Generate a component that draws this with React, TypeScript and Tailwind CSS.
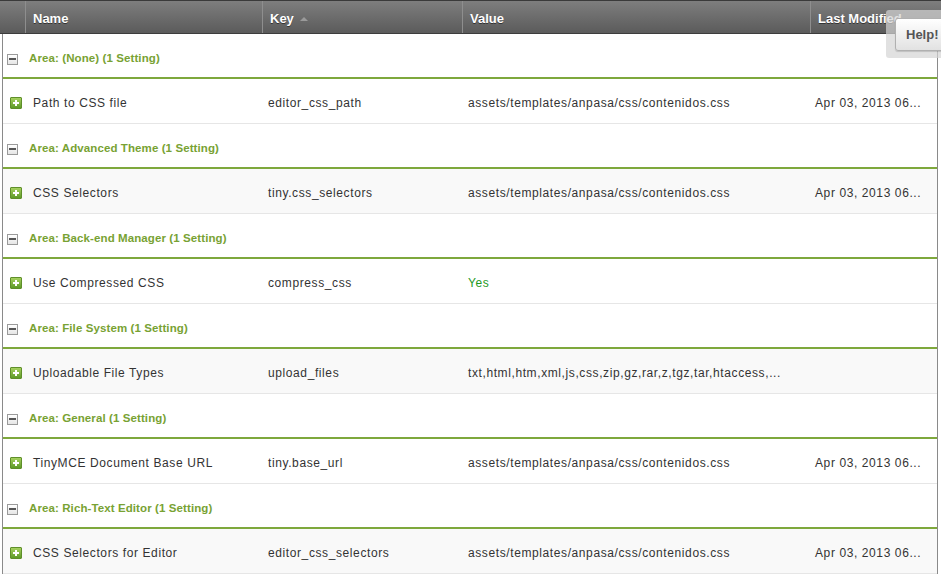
import React from 'react';

type Setting = { name: string; key: string; value: string; modified: string; green?: boolean };
type Area = { title: string; setting: Setting };

const areas: Area[] = [
  { title: 'Area: (None) (1 Setting)', setting: { name: 'Path to CSS file', key: 'editor_css_path', value: 'assets/templates/anpasa/css/contenidos.css', modified: 'Apr 03, 2013 06...' } },
  { title: 'Area: Advanced Theme (1 Setting)', setting: { name: 'CSS Selectors', key: 'tiny.css_selectors', value: 'assets/templates/anpasa/css/contenidos.css', modified: 'Apr 03, 2013 06...' } },
  { title: 'Area: Back-end Manager (1 Setting)', setting: { name: 'Use Compressed CSS', key: 'compress_css', value: 'Yes', modified: '', green: true } },
  { title: 'Area: File System (1 Setting)', setting: { name: 'Uploadable File Types', key: 'upload_files', value: 'txt,html,htm,xml,js,css,zip,gz,rar,z,tgz,tar,htaccess,...', modified: '' } },
  { title: 'Area: General (1 Setting)', setting: { name: 'TinyMCE Document Base URL', key: 'tiny.base_url', value: 'assets/templates/anpasa/css/contenidos.css', modified: 'Apr 03, 2013 06...' } },
  { title: 'Area: Rich-Text Editor (1 Setting)', setting: { name: 'CSS Selectors for Editor', key: 'editor_css_selectors', value: 'assets/templates/anpasa/css/contenidos.css', modified: 'Apr 03, 2013 06...' } },
];

function MinusBox() {
  return (
    <span className="flex h-[11px] w-[11px] items-center justify-center border border-[#9a9a9a] bg-gradient-to-b from-white to-[#e6e6e6]">
      <span className="block h-[2px] w-[7px] bg-[#555]" />
    </span>
  );
}

function PlusBox() {
  return (
    <span className="relative flex h-[12px] w-[12px] items-center justify-center rounded-[1px] border border-[#5f8f2a] bg-gradient-to-b from-[#a6d05e] to-[#5e9a28]">
      <span className="absolute h-[2px] w-[6px] bg-white" />
      <span className="absolute h-[6px] w-[2px] bg-white" />
    </span>
  );
}

function HeaderCell({ label, first, sort }: { label?: string; first?: boolean; sort?: boolean }) {
  return (
    <div className={`flex h-full items-center gap-[6px] pt-[3px] ${first ? '' : 'border-l border-l-[#8e8e8e] pl-[7px]'} text-[13px] font-bold text-white [text-shadow:0_1px_0_#333]`}>
      {label}
      {sort && <span className="mt-[1px] h-0 w-0 border-x-[4px] border-b-[4px] border-x-transparent border-b-[#9a9a9a]" />}
    </div>
  );
}

export default function App() {
  return (
    <div className="relative h-[587px] w-[941px] overflow-hidden bg-white" style={{ fontFamily: '"Liberation Sans", Arial, sans-serif' }}>
      <div className="grid h-[34px] w-[941px] grid-cols-[25px_237px_200px_348px_1fr] border-t border-t-[#3a3a3a] border-b border-b-[#3c3c3c] bg-gradient-to-b from-[#7e7e7e] to-[#5b5b5b]">
        <HeaderCell first />
        <HeaderCell label="Name" />
        <HeaderCell label="Key" sort />
        <HeaderCell label="Value" />
        <HeaderCell label="Last Modified" />
      </div>

      <div className="ml-[2px] w-[936px] border-x border-x-[#8a8a8a]">
        {areas.map((a, i) => (
          <div key={a.title}>
            <div className="flex h-[45px] items-center gap-[11px] border-b-2 border-b-[#7ea83c] pl-[4px] pt-[7px]">
              <MinusBox />
              <span className="text-[11.5px] font-bold tracking-[0.1px] text-[#78a233]">{a.title}</span>
            </div>
            <div className={`grid h-[45px] grid-cols-[22px_237px_200px_348px_1fr] items-center border-b border-b-[#e6e6e6] pt-[3px] text-[12px] tracking-[0.6px] text-[#333] ${i % 2 === 1 ? 'bg-[#f9f9f9]' : 'bg-white'}`}>
              <div className="flex pl-[7px]">
                <PlusBox />
              </div>
              <div className="pl-[8px]">{a.setting.name}</div>
              <div className="pl-[6px]">{a.setting.key}</div>
              <div className={`pl-[6px] ${a.setting.green ? 'text-[#1f9a1f]' : ''}`}>{a.setting.value}</div>
              <div className="pl-[5px] whitespace-nowrap">{a.setting.modified}</div>
            </div>
          </div>
        ))}
      </div>

      <div className="absolute right-0 top-[10px] h-[48px] w-[55px] rounded-l-[3px] bg-[#d4d4d4]/70">
        <div className="absolute left-[9px] top-[8px] flex h-[33px] w-[60px] items-center rounded-[3px] border border-[#b0b0b0] bg-gradient-to-b from-white to-[#e2e2e2] pl-[10px] text-[13px] font-bold text-[#555] shadow-[0_1px_1px_rgba(0,0,0,0.15)]">
          Help!
        </div>
      </div>
    </div>
  );
}
